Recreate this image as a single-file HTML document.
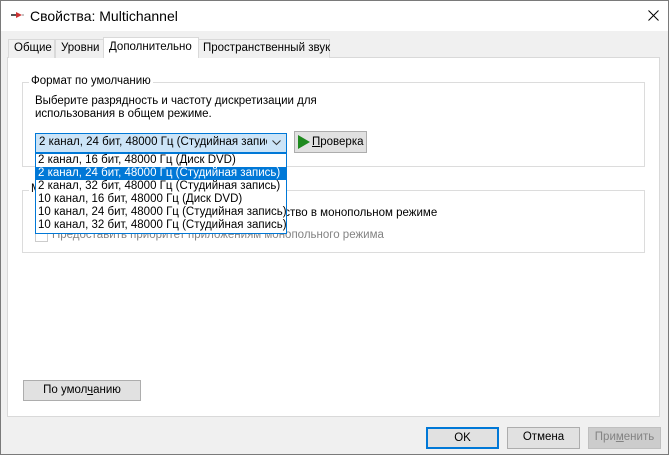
<!DOCTYPE html>
<html><head><meta charset="utf-8"><style>
*{margin:0;padding:0;box-sizing:border-box}
body{width:669px;height:455px;overflow:hidden;background:#f0f0f0;font-family:"Liberation Sans",sans-serif;font-size:11.5px;color:#000;position:relative}
.a{position:absolute;white-space:nowrap}
.win{left:0;top:0;width:669px;height:455px;border:1px solid #7a7a7a}
.title{left:1px;top:1px;width:667px;height:30px;background:#fff}
.tab{top:39px;height:19px;border:1px solid #d9d9d9;border-bottom:none;background:#f0f0f0;padding:2px 0 0 5px;font-size:11.5px}
.panel{left:7px;top:57px;width:653px;height:360px;background:#fff;border:1px solid #d9d9d9}
.grp{border:1px solid #dcdcdc}
.lbl{background:#fff;padding:0 2px}
.btn{background:#e1e1e1;border:1px solid #adadad;text-align:center;line-height:19px}
.item{position:absolute;left:0;width:250px;height:13px;line-height:13px;padding-left:2px;white-space:nowrap;font-size:11.5px}
</style></head><body>
<div class="a win"></div>
<div class="a title"></div>
<svg class="a" style="left:10px;top:10px" width="14" height="10" viewBox="0 0 14 10"><path d="M1 5h5" stroke="#555" stroke-width="2"/><path d="M6 2l6 3-6 3z" fill="#c33"/><path d="M12 5h2" stroke="#888"/></svg>
<div class="a" style="left:30px;top:8px;font-size:14px">Свойства: Multichannel</div>
<svg class="a" style="left:648px;top:10px" width="11" height="11"><path d="M0.5 0.5l10 10M10.5 0.5l-10 10" stroke="#000" stroke-width="1"/></svg>
<div class="a panel"></div>
<div class="a tab" style="left:8px;width:47px">Общие</div>
<div class="a tab" style="left:55px;width:49px">Уровни</div>
<div class="a tab" style="left:198px;width:132px;padding-left:4px">Пространственный звук</div>
<div class="a tab" style="left:103px;top:37px;height:21px;width:96px;background:#fff;padding-top:3px">Дополнительно</div>
<div class="a grp" style="left:22px;top:82px;width:623px;height:85px"></div>
<div class="a lbl" style="left:29px;top:75px">Формат по умолчанию</div>
<div class="a" style="left:35px;top:95px;line-height:13px">Выберите разрядность и частоту дискретизации для<br>использования в общем режиме.</div>
<div class="a" style="left:35px;top:133px;width:252px;height:20px;background:#cce4f7;border:1px solid #0078d7;padding:2px 0 0 3px;overflow:hidden">2 канал, 24 бит, 48000 Гц (Студийная записі</div>
<div class="a" style="left:267px;top:134px;width:19px;height:18px;background:#cce4f7"></div>
<svg class="a" style="left:272px;top:140px" width="9" height="6"><path d="M0.5 0.5l4 4 4-4" stroke="#333" fill="none"/></svg>
<div class="a btn" style="left:294px;top:131px;width:73px;height:22px;text-align:left;padding-left:17px;line-height:20px"><u>П</u>роверка</div>
<svg class="a" style="left:297px;top:135px" width="14" height="14"><path d="M1 0l12 7-12 7z" fill="#1f8a1f"/></svg>
<div class="a grp" style="left:22px;top:190px;width:623px;height:63px"></div>
<div class="a lbl" style="left:29px;top:183px">Монопольный режим</div>
<div class="a" style="left:35px;top:207px">Разрешить приложениям использовать устройство в монопольном режиме</div>
<div class="a" style="left:35px;top:229px;width:13px;height:13px;border:1px solid #ccc"></div>
<div class="a" style="left:52px;top:229px;color:#838383">Предоставить приоритет приложениям монопольного режима</div>
<div class="a" style="left:35px;top:153px;width:252px;height:81px;background:#fff;border:1px solid #0078d7">
<div class="item" style="top:0">2 канал, 16 бит, 48000 Гц (Диск DVD)</div>
<div class="item" style="top:13px;background:#0078d7;color:#fff">2 канал, 24 бит, 48000 Гц (Студийная запись)</div>
<div class="item" style="top:26px">2 канал, 32 бит, 48000 Гц (Студийная запись)</div>
<div class="item" style="top:39px">10 канал, 16 бит, 48000 Гц (Диск DVD)</div>
<div class="item" style="top:52px">10 канал, 24 бит, 48000 Гц (Студийная запись)</div>
<div class="item" style="top:65px">10 канал, 32 бит, 48000 Гц (Студийная запись)</div>
</div>
<div class="a btn" style="left:23px;top:380px;width:118px;height:21px">По умол<u>ч</u>анию</div>
<div class="a btn" style="left:426px;top:427px;width:73px;height:22px;border:2px solid #0078d7;line-height:18px">OK</div>
<div class="a btn" style="left:507px;top:427px;width:73px;height:22px">Отмена</div>
<div class="a btn" style="left:588px;top:427px;width:73px;height:22px;background:#ccc;border-color:#bfbfbf;color:#838383">При<u>м</u>енить</div>
</body></html>
